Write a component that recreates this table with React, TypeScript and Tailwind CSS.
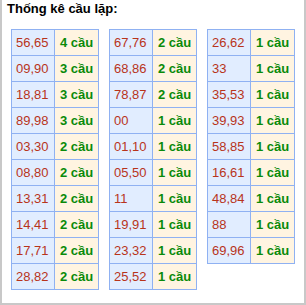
import React from 'react'

const tables: [string, string][][] = [
  [
    ['56,65', '4 cầu'],
    ['09,90', '3 cầu'],
    ['18,81', '3 cầu'],
    ['89,98', '3 cầu'],
    ['03,30', '2 cầu'],
    ['08,80', '2 cầu'],
    ['13,31', '2 cầu'],
    ['14,41', '2 cầu'],
    ['17,71', '2 cầu'],
    ['28,82', '2 cầu'],
  ],
  [
    ['67,76', '2 cầu'],
    ['68,86', '2 cầu'],
    ['78,87', '2 cầu'],
    ['00', '1 cầu'],
    ['01,10', '1 cầu'],
    ['05,50', '1 cầu'],
    ['11', '1 cầu'],
    ['19,91', '1 cầu'],
    ['23,32', '1 cầu'],
    ['25,52', '1 cầu'],
  ],
  [
    ['26,62', '1 cầu'],
    ['33', '1 cầu'],
    ['35,53', '1 cầu'],
    ['39,93', '1 cầu'],
    ['58,85', '1 cầu'],
    ['16,61', '1 cầu'],
    ['48,84', '1 cầu'],
    ['88', '1 cầu'],
    ['69,96', '1 cầu'],
  ],
]

function App() {
  return (
    <div
      className="w-[306px] h-[305px] border-x-2 border-b-2 border-[#c8c8c8] bg-white"
      style={{ fontFamily: '"Liberation Sans", Arial, sans-serif' }}
    >
      <div className="pl-[5px] pt-[1px] h-[29px] text-[13px] font-bold text-black leading-[16px]">
        Thống kê cầu lặp:
      </div>
      <div className="flex items-start gap-[10px] pl-[9px]">
        {tables.map((rows, t) => (
          <div key={t} className="border-l border-t border-[#8fb1f2]">
            {rows.map(([num, cnt], i) => (
              <div key={i} className="flex h-[26px] text-[13px]">
                <div className="w-[43px] border-r border-b border-[#8fb1f2] bg-[#e1edff] pl-[4px] flex items-center text-[#b8341b]">
                  {num}
                </div>
                <div className="w-[44px] border-r border-b border-[#8fb1f2] bg-[#fff4e1] pl-[5px] flex items-center font-bold text-[#0a8a0a]">
                  {cnt}
                </div>
              </div>
            ))}
          </div>
        ))}
      </div>
    </div>
  )
}

export default App
